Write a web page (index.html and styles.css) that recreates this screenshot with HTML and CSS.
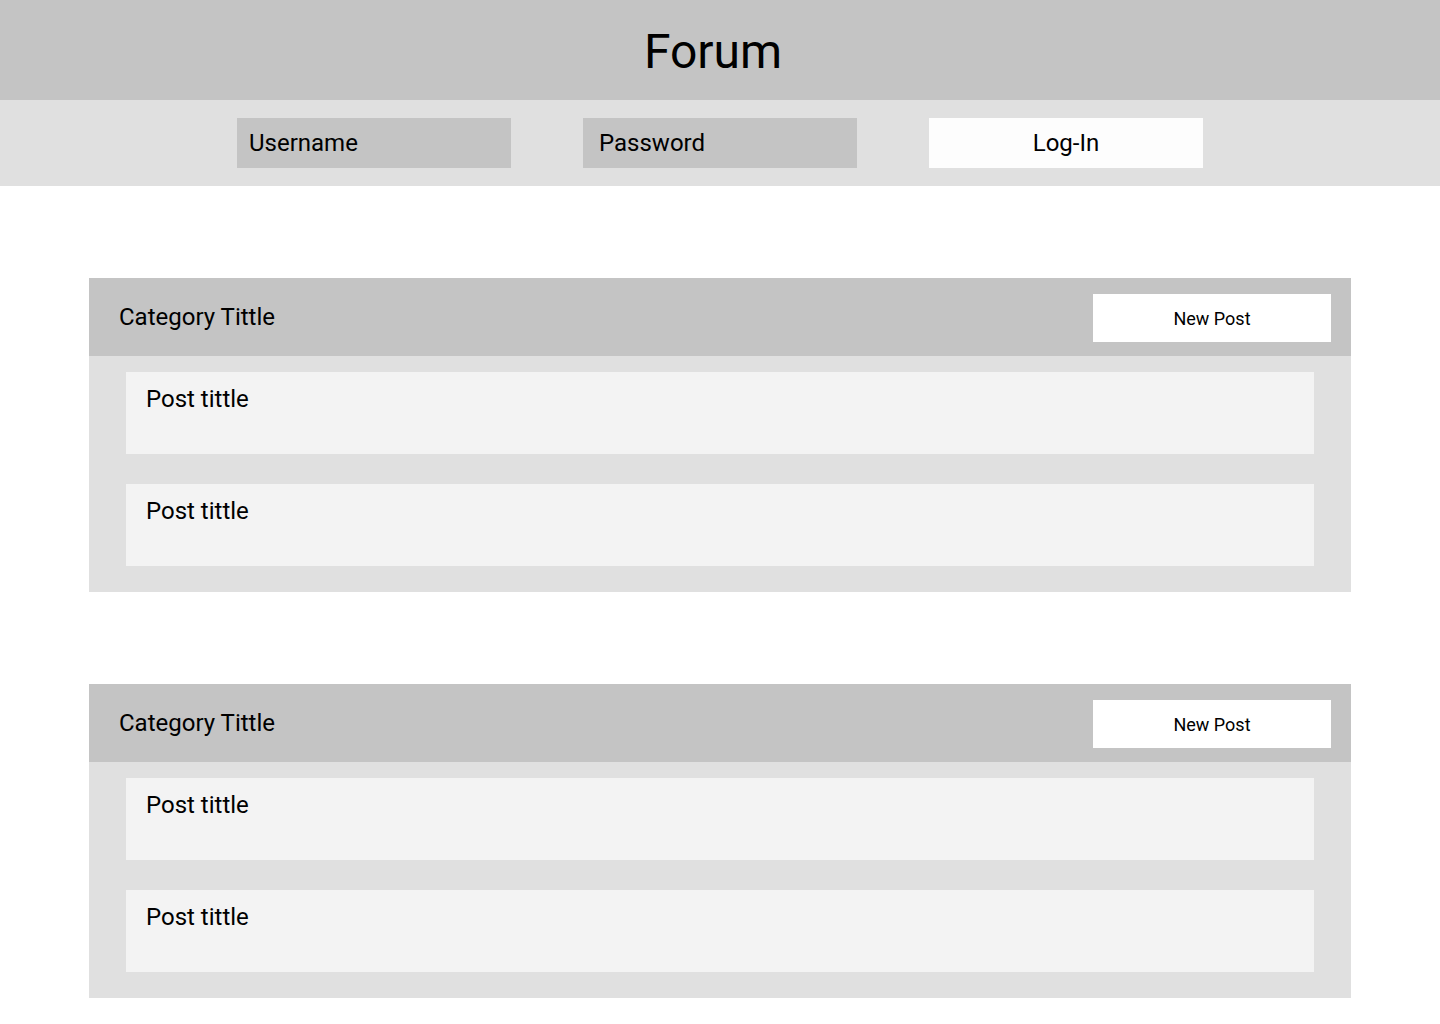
FILE: index.html
```html
<!DOCTYPE html>
<html lang="en">
<head>
<meta charset="utf-8">
<title>Forum</title>
<link rel="stylesheet" href="styles.css">
</head>
<body>
<header class="site-header">
  <h1 class="site-title">Forum</h1>
</header>
<div class="login-bar">
  <div class="field field-user">Username</div>
  <div class="field field-pass">Password</div>
  <div class="login-btn">Log-In</div>
</div>
<main class="content">
  <section class="category">
    <div class="category-head">
      <h2 class="category-title">Category Tittle</h2>
      <div class="new-post">New Post</div>
    </div>
    <div class="category-body">
      <div class="post">Post tittle</div>
      <div class="post">Post tittle</div>
    </div>
  </section>
  <section class="category">
    <div class="category-head">
      <h2 class="category-title">Category Tittle</h2>
      <div class="new-post">New Post</div>
    </div>
    <div class="category-body">
      <div class="post">Post tittle</div>
      <div class="post">Post tittle</div>
    </div>
  </section>
</main>
</body>
</html>
```

FILE: styles.css
```css
* { box-sizing: border-box; }
html, body { margin: 0; padding: 0; }
body {
  background: #ffffff;
  font-family: Roboto, "Liberation Sans", Arial, sans-serif;
  color: #000000;
}
.site-header {
  height: 100px;
  background: #c4c4c4;
  display: flex;
  align-items: center;
  justify-content: center;
  padding-top: 4px;
}
.site-title {
  margin: 0 14px 0 0;
  font-size: 48px;
  font-weight: 400;
  line-height: 1;
}
.login-bar {
  height: 86px;
  background: #e0e0e0;
  display: flex;
  justify-content: center;
  align-items: flex-start;
  padding-top: 18px;
  gap: 72px;
}
.field, .login-btn {
  width: 274px;
  height: 50px;
  font-size: 24px;
  display: flex;
  align-items: center;
}
.field { background: #c4c4c4; }
.field-user { padding-left: 12px; }
.field-pass { padding-left: 16px; }
.login-btn {
  background: #fdfdfd;
  justify-content: center;
}
.content {
  padding: 92px 89px 26px;
  display: flex;
  flex-direction: column;
  gap: 92px;
}
.category-head {
  height: 78px;
  background: #c4c4c4;
  display: flex;
  align-items: center;
  justify-content: space-between;
  padding: 0 20px 0 30px;
}
.category-title {
  margin: 0;
  font-size: 24px;
  font-weight: 400;
}
.new-post {
  width: 238px;
  height: 48px;
  margin-top: 2px;
  background: #ffffff;
  font-size: 18px;
  display: flex;
  align-items: center;
  justify-content: center;
}
.category-body {
  background: #e0e0e0;
  padding: 16px 37px 26px;
  display: flex;
  flex-direction: column;
  gap: 30px;
}
.post {
  height: 82px;
  background: #f3f3f3;
  font-size: 24px;
  padding: 13px 20px 0;
}
```
